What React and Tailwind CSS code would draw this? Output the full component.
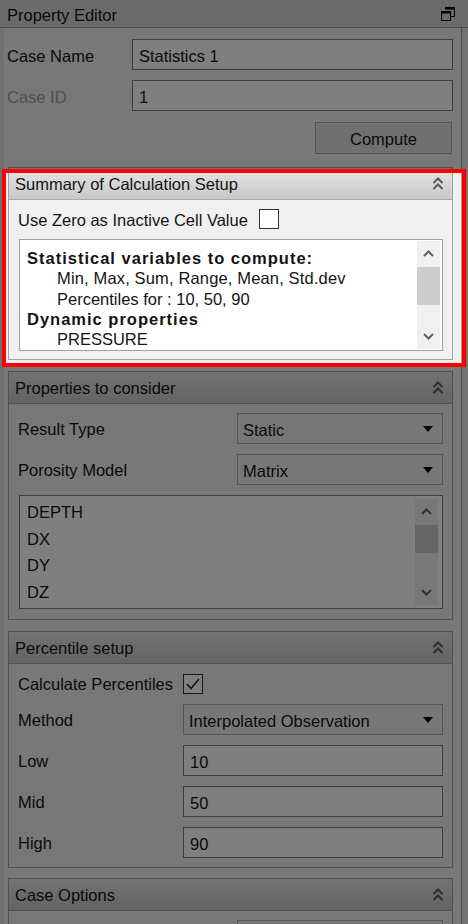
import React from 'react'

const Chevrons = () => (
    <svg width="12" height="15" viewBox="0 0 12 15" fill="none" stroke="#5a5a5a" strokeWidth="2">
        <path d="M1.5 7 L6 2.5 L10.5 7" />
        <path d="M1.5 13 L6 8.5 L10.5 13" />
    </svg>
)

const RestoreIcon = () => (
    <svg width="14" height="14" viewBox="0 0 14 14">
        <path d="M4.5 0.5 H13.5 V9.5 H10" fill="none" stroke="#000" strokeWidth="1" />
        <rect x="4" y="0" width="10" height="2.5" fill="#000" />
        <rect x="0.5" y="4.5" width="9" height="9" fill="#d4d4d4" stroke="#000" strokeWidth="1" />
        <rect x="0" y="4" width="10" height="2.5" fill="#000" />
    </svg>
)

const Arrow = ({ down }) => (
    <svg width="11" height="7" viewBox="0 0 11 7" fill="none" stroke="#606060" strokeWidth="2">
        {down ? <path d="M1 1 L5.5 5.5 L10 1" /> : <path d="M1 6 L5.5 1.5 L10 6" />}
    </svg>
)

function Scrollbar({ handleTop, handleHeight }) {
    return (
        <div className="relative w-[23px] h-full bg-[#f0f0f0] flex flex-col items-center justify-between py-[9px]">
            <Arrow />
            <div
                className="absolute left-0 w-[23px] bg-[#cdcdcd]"
                style={{ top: handleTop, height: handleHeight }}
            />
            <Arrow down />
        </div>
    )
}

function GroupBox({ title, children, className = '' }) {
    return (
        <div className={`ml-[4px] w-[445px] border border-[#a2a2a2] bg-[#f0f0f0] ${className}`}>
            <div className="h-[32px] flex items-center justify-between pl-[6px] pr-[8px] bg-gradient-to-b from-[#e6e6e6] to-[#c8c8c8] border-b border-[#a9a9a9]">
                <span>{title}</span>
                <Chevrons />
            </div>
            {children}
        </div>
    )
}

const TextField = ({ value, className = '' }) => (
    <div className={`h-[31px] border border-[#7a7a7a] bg-white pl-[6px] pt-[2px] flex items-center ${className}`}>
        {value}
    </div>
)

const Combo = ({ value, className = '' }) => (
    <div className={`h-[31px] border border-[#acacac] bg-[#eeeeee] pl-[5px] pr-[9px] flex items-center justify-between ${className}`}>
        <span className="pt-[2px]">{value}</span>
        <svg width="10" height="6" viewBox="0 0 10 6">
            <path d="M0 0 H10 L5 6 Z" fill="#000" />
        </svg>
    </div>
)

const Checkbox = ({ checked }) => (
    <div className="w-[20px] h-[20px] border border-[#333] bg-white flex items-center justify-center">
        {checked && (
            <svg width="16" height="14" viewBox="0 0 16 14" fill="none" stroke="#222" strokeWidth="1.6">
                <path d="M2 7 L6 11.5 L14 2" />
            </svg>
        )}
    </div>
)

const FormRow = ({ label, children }) => (
    <div className="flex items-center justify-between">
        <span>{label}</span>
        {children}
    </div>
)

export default function App() {
    return (
        <div className="relative w-[468px] h-[924px] overflow-hidden bg-[#f0f0f0] text-[16.5px] leading-[20px] text-[#141414] font-['Liberation_Sans',Arial,sans-serif]">
            <div className="h-[28px] bg-[#d4d4d4] border-b border-[#9c9c9c] flex items-center justify-between pl-[7px] pr-[13px]">
                <span className="pt-[3px]">Property Editor</span>
                <RestoreIcon />
            </div>

            <div className="flex h-[896px]">
                <div className="w-[4px] bg-[#e2e2e2]" />
                <div className="w-[457px] flex flex-col">
                    <div className="flex items-center h-[31px] mt-[11px] pl-[3px]">
                        <span className="w-[125px] pt-[2px]">Case Name</span>
                        <TextField value="Statistics 1" className="w-[321px]" />
                    </div>
                    <div className="flex items-center h-[31px] mt-[10px] pl-[3px]">
                        <span className="w-[125px] pt-[2px] text-[#a0a0a0]">Case ID</span>
                        <TextField value="1" className="w-[321px]" />
                    </div>
                    <div className="flex justify-end mt-[11px] pr-[9px]">
                        <div className="w-[137px] h-[32px] pt-[2px] border border-[#adadad] bg-[#e1e1e1] flex items-center justify-center">
                            Compute
                        </div>
                    </div>

                    <GroupBox title="Summary of Calculation Setup" className="mt-[13px]">
                        <div className="pt-[9px] pb-[8px] pl-[9px] pr-[9px]">
                            <div className="flex items-center gap-[11px] h-[20px]">
                                <span className="pt-[2px]">Use Zero as Inactive Cell Value</span>
                                <Checkbox />
                            </div>
                            <div className="mt-[10px] ml-px h-[112px] border border-[#a0a0a0] bg-white flex">
                                <div className="flex-1 pl-[7px] pt-[8px] leading-[20.3px]">
                                    <div className="font-bold tracking-[1px]">Statistical variables to compute:</div>
                                    <div className="pl-[30px] tracking-[0.15px]">Min, Max, Sum, Range, Mean, Std.dev</div>
                                    <div className="pl-[30px]">Percentiles for : 10, 50, 90</div>
                                    <div className="font-bold tracking-[1px]">Dynamic properties</div>
                                    <div className="pl-[30px]">PRESSURE</div>
                                </div>
                                <div className="py-px pr-[2px]">
                                    <Scrollbar handleTop={26} handleHeight={38} />
                                </div>
                            </div>
                        </div>
                    </GroupBox>

                    <GroupBox title="Properties to consider" className="mt-[11px]">
                        <div className="pt-[9px] pb-[10px] px-[9px] flex flex-col gap-[10px]">
                            <FormRow label="Result Type">
                                <Combo value="Static" className="w-[206px]" />
                            </FormRow>
                            <FormRow label="Porosity Model">
                                <Combo value="Matrix" className="w-[206px]" />
                            </FormRow>
                            <div className="ml-px h-[114px] border border-[#7a7a7a] bg-white flex">
                                <div className="flex-1 pl-[7px] pt-[3px] leading-[26.7px]">
                                    <div>DEPTH</div>
                                    <div>DX</div>
                                    <div>DY</div>
                                    <div>DZ</div>
                                </div>
                                <div className="py-[3px] pr-[4px]">
                                    <Scrollbar handleTop={26} handleHeight={28} />
                                </div>
                            </div>
                        </div>
                    </GroupBox>

                    <GroupBox title="Percentile setup" className="mt-[11px]">
                        <div className="pt-[10px] pb-[9px] px-[9px] flex flex-col gap-[10px]">
                            <div className="flex items-center gap-[10px] h-[20px]">
                                <span>Calculate Percentiles</span>
                                <Checkbox checked />
                            </div>
                            <FormRow label="Method">
                                <Combo value="Interpolated Observation" className="w-[260px]" />
                            </FormRow>
                            <FormRow label="Low">
                                <TextField value="10" className="w-[260px]" />
                            </FormRow>
                            <FormRow label="Mid">
                                <TextField value="50" className="w-[260px]" />
                            </FormRow>
                            <FormRow label="High">
                                <TextField value="90" className="w-[260px]" />
                            </FormRow>
                        </div>
                    </GroupBox>

                    <GroupBox title="Case Options" className="mt-[10px]">
                        <div className="pt-[9px] px-[9px] flex justify-end">
                            <div className="w-[206px] h-[31px] border border-[#acacac] bg-[#eeeeee]" />
                        </div>
                    </GroupBox>
                </div>
                <div className="w-px bg-[#9c9c9c]" />
                <div className="flex-1 bg-[#e4e4e4]" />
            </div>

            <div className="absolute left-[2px] top-[169px] w-[464px] h-[198px] border-[4px] border-[#ff0000] shadow-[0_0_0_2000px_rgba(0,0,0,0.5)] pointer-events-none" />
        </div>
    )
}
